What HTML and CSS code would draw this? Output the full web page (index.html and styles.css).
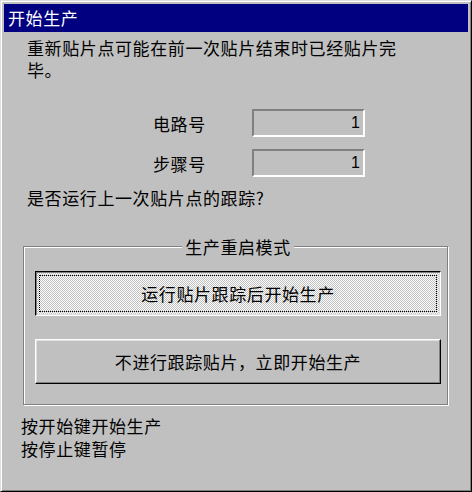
FILE: index.html
```html
<!DOCTYPE html>
<html lang="zh-CN">
<head>
    <meta charset="UTF-8">
    <meta name="viewport" content="width=device-width, initial-scale=1.0">
    <title>开始生产</title>
    <link rel="stylesheet" href="styles.css">
</head>
<body>
    <div class="window">
        <div class="title-bar">开始生产</div>

        <p class="intro">重新贴片点可能在前一次贴片结束时已经贴片完<br>毕。</p>

        <div class="field">
            <span class="field-label">电路号</span>
            <span class="field-value">1</span>
        </div>
        <div class="field">
            <span class="field-label">步骤号</span>
            <span class="field-value">1</span>
        </div>

        <p class="question">是否运行上一次贴片点的跟踪?</p>

        <fieldset class="group">
            <legend>生产重启模式</legend>
            <button class="btn btn-on">运行贴片跟踪后开始生产</button>
            <button class="btn">不进行跟踪贴片，立即开始生产</button>
        </fieldset>

        <p class="hint">按开始键开始生产<br>按停止键暂停</p>
    </div>
</body>
</html>
```

FILE: styles.css
```css
body {
    margin: 0;
    background-color: #c0c0c0;
    font-family: 'Noto Sans CJK SC', sans-serif;
    font-size: 17px;
    letter-spacing: 0.6px;
    color: #000;
}
.window {
    box-sizing: border-box;
    width: 472px;
    height: 492px;
    padding: 3px;
    background-color: #c0c0c0;
    border: 1px solid;
    border-color: #dfdfdf #000 #000 #dfdfdf;
    box-shadow: inset 1px 1px #fff, inset -1px -1px #808080;
}
.title-bar {
    height: 28px;
    line-height: 28px;
    padding-left: 4px;
    background-color: #000080;
    color: #fff;
}
.intro {
    margin: 5px 0 0 23px;
    line-height: 22px;
}
.field {
    display: flex;
    align-items: center;
    margin-left: 149px;
}
.intro + .field {
    margin-top: 28px;
}
.field + .field {
    margin-top: 12px;
}
.field-label {
    width: 99px;
}
.field-value {
    box-sizing: border-box;
    width: 113px;
    height: 28px;
    padding-right: 3px;
    border: 2px solid;
    border-color: #808080 #fff #fff #808080;
    font-family: 'Liberation Sans', sans-serif;
    font-size: 16px;
    letter-spacing: 0;
    line-height: 24px;
    text-align: right;
}
.question {
    margin: 10px 0 0 23px;
    line-height: 22px;
}
.group {
    box-sizing: border-box;
    width: 425px;
    margin: 27px 0 0 19px;
    padding: 14px 6px 20px 11px;
    border: 1px solid #808080;
    box-shadow: inset 1px 1px #fff, 1px 1px #fff;
    display: flex;
    flex-direction: column;
    gap: 23px;
}
.group legend {
    margin: 0 auto;
    padding: 0 3px;
    background-color: #c0c0c0;
    line-height: 21px;
}
.btn {
    height: 45px;
    padding: 0;
    border: 1px solid;
    border-color: #fff #000 #000 #fff;
    box-shadow: inset -1px -1px #808080, inset 1px 1px #dfdfdf;
    background-color: #c0c0c0;
    font: inherit;
    letter-spacing: inherit;
    color: #000;
}
.btn-on {
    border-color: #000 #fff #fff #000;
    box-shadow: inset 1px 1px #808080, inset -1px -1px #dfdfdf;
    background: repeating-conic-gradient(#fff 0 25%, #c0c0c0 0 50%) 0 0 / 2px 2px;
    outline: 1px dotted #000;
    outline-offset: -5px;
}
.hint {
    margin: 9px 0 0 17px;
    line-height: 23px;
}
```
